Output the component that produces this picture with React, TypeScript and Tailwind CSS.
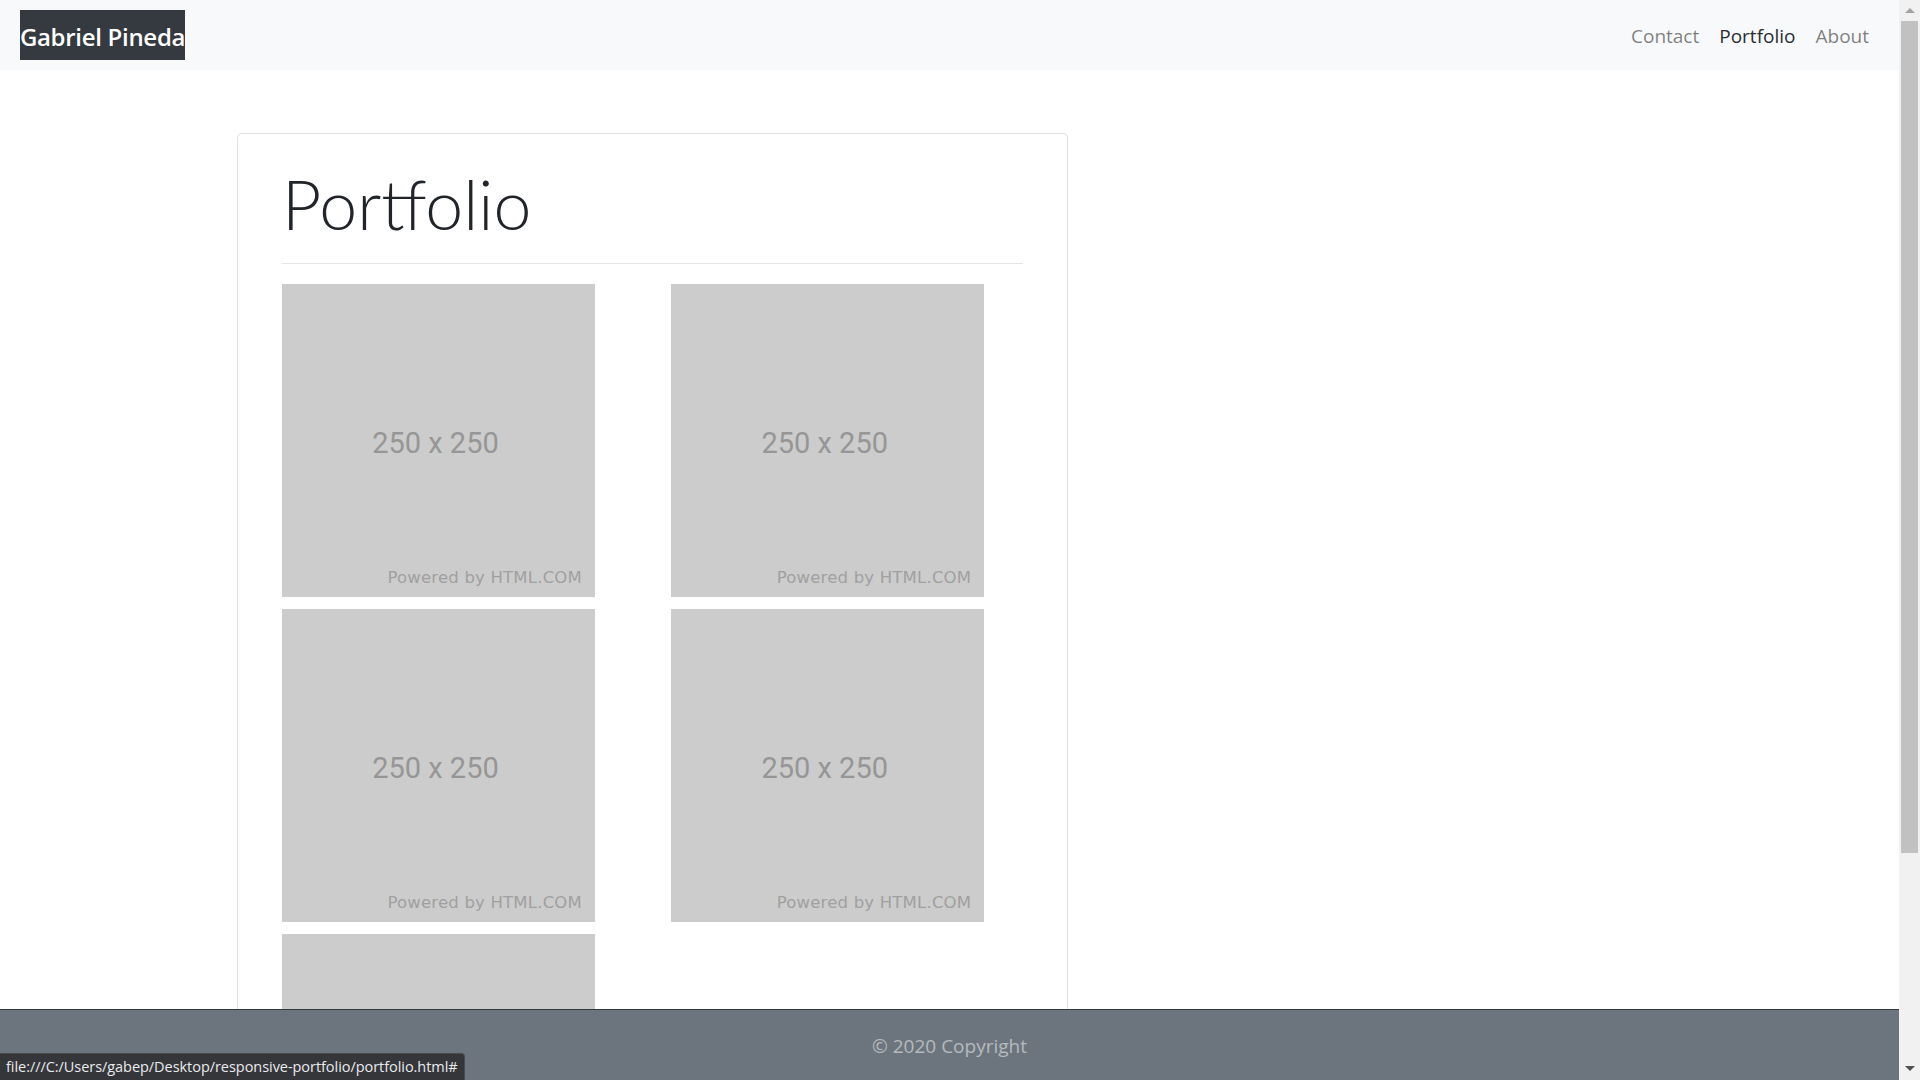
const placeholders = [1, 2, 3, 4];

function Placeholder() {
  return (
    <div className="relative h-[313px] w-[313px] bg-[#cccccc]">
      <div className="flex h-full w-full items-center justify-center pt-[6px] pr-[6px] font-['Roboto',sans-serif] text-[29px] text-[#969696]">
        250 x 250
      </div>
      <div className="absolute right-[13px] bottom-[9px] font-['DejaVu_Sans',sans-serif] text-[16.5px] leading-[20px] tracking-[0.2px] text-[#a0a0a0]">
        Powered by HTML.COM
      </div>
    </div>
  );
}

function Scrollbar() {
  return (
    <div className="flex h-full w-[21px] shrink-0 flex-col items-center bg-[#f1f1f1]">
      <div className="flex h-[21px] w-full items-center justify-center">
        <div className="h-0 w-0 border-x-[5px] border-b-[5px] border-x-transparent border-b-[#a3a3a3]" />
      </div>
      <div className="h-[832px] w-[17px] bg-[#c1c1c1]" />
      <div className="flex-1" />
      <div className="flex h-[24px] w-full items-center justify-center">
        <div className="h-0 w-0 border-x-[5px] border-t-[5px] border-x-transparent border-t-[#505050]" />
      </div>
    </div>
  );
}

export default function App() {
  return (
    <div className="flex h-[1080px] w-full overflow-hidden bg-white font-['Open_Sans',sans-serif]">
      <div className="relative flex min-w-0 flex-1 flex-col">
        <nav className="flex h-[70px] shrink-0 items-center justify-between bg-[#f8f9fa] px-[20px]">
          <a href="#" className="flex h-[50px] w-[165px] items-center justify-center whitespace-nowrap bg-[#343a40] pt-[3px] text-[24px] font-semibold tracking-[-0.3px] text-white">
            Gabriel Pineda
          </a>
          <div className="flex items-center pt-[2px] text-[19px]">
            <a href="#" className="px-[10px] text-black/50">Contact</a>
            <a href="#" className="px-[10px] text-[#2a2e33]">Portfolio</a>
            <a href="#" className="px-[10px] text-black/50">About</a>
          </div>
        </nav>

        <main className="min-h-0 flex-1 overflow-hidden">
          <div className="mt-[63px] ml-[237px] w-[831px] rounded-[5px] border border-black/[0.125] px-[44px] pt-[25px]">
            <h1 className="pt-[3px] font-['Lato',sans-serif] text-[68px] leading-[84px] font-light text-[#212529]">
              Portfolio
            </h1>
            <hr className="mt-[17px] mb-[20px] border-black/10" />
            <div className="grid grid-cols-2 gap-x-[37.5px] gap-y-[12px]">
              {placeholders.map((p) => (
                <Placeholder key={p} />
              ))}
              <div className="h-[313px] w-[313px] bg-[#cccccc]" />
            </div>
          </div>
        </main>

        <footer className="flex h-[71px] shrink-0 items-center justify-center border-t border-[#343a40] bg-[#6c757d] pt-[2px] text-[19px] text-white/50">
          © 2020 Copyright
        </footer>

        <div className="absolute bottom-0 left-0 flex h-[27px] w-[465px] items-center rounded-tr-[4px] border-t border-r border-[#4a4b4f] bg-[#35363a] pl-[6px] text-[14.5px] tracking-[-0.05px] text-[#e8eaed]">
          file:///C:/Users/gabep/Desktop/responsive-portfolio/portfolio.html#
        </div>
      </div>
      <Scrollbar />
    </div>
  );
}
